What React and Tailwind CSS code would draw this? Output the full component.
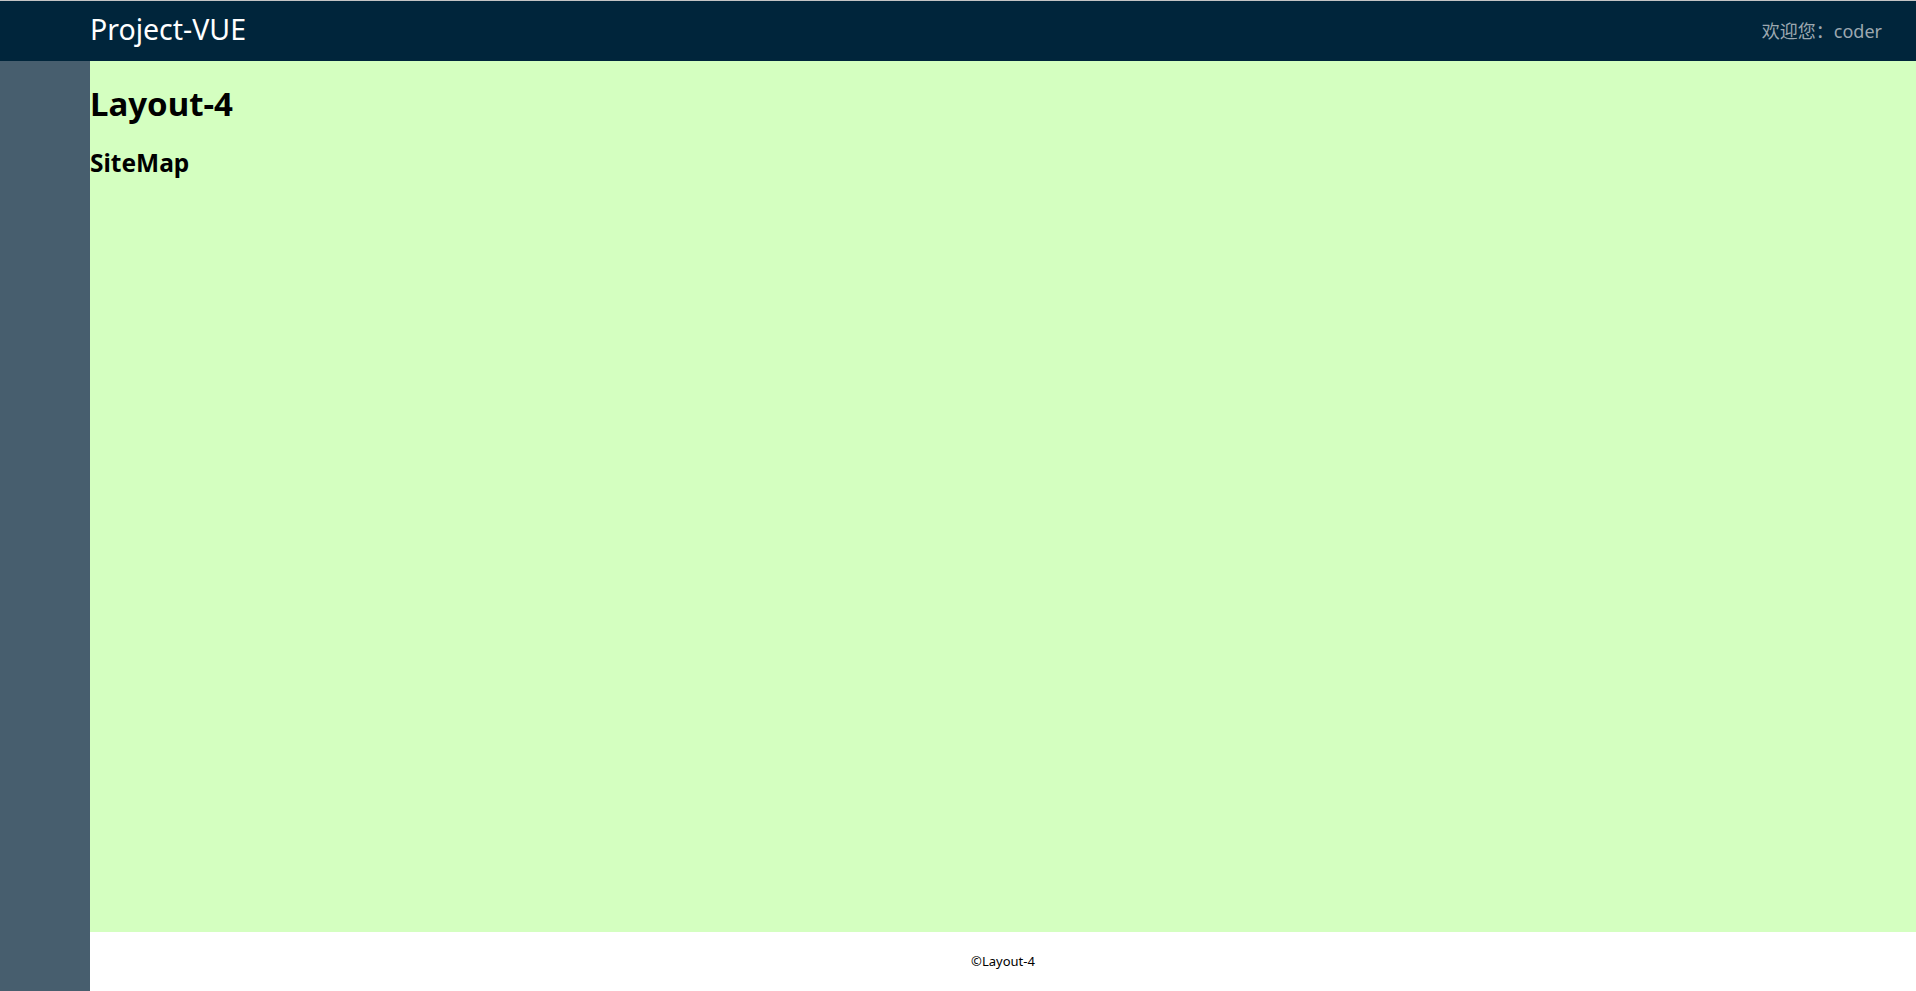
import React from 'react';

export default function App() {
  return (
    <div className="h-[991px] flex flex-col font-['Noto_Sans','Noto_Sans_CJK_SC',sans-serif]">
      {/* header */}
      <header className="h-[61px] border-t border-[#c4c4c4] bg-[#00253b] flex items-center justify-between pl-[90px] pr-[34px]">
        <div className="text-white text-[28.5px] leading-none -mt-[4px]">Project-VUE</div>
        <div className="text-[#9ca8b0] text-[18px] leading-none">欢迎您：coder</div>
      </header>

      <div className="flex-1 flex min-h-0">
        {/* sidebar */}
        <aside className="w-[90px] bg-[#475e6e]" />

        <div className="flex-1 flex flex-col">
          <main className="flex-1 bg-[#d4ffc0]">
            <h1 className="text-[33px] font-bold leading-none mt-[26px]">Layout-4</h1>
            <h2 className="text-[24.5px] font-bold leading-none mt-[31px]">SiteMap</h2>
          </main>
          <footer className="h-[59px] bg-white flex items-center justify-center">
            <span className="text-[13px] text-black">©Layout-4</span>
          </footer>
        </div>
      </div>
    </div>
  );
}
